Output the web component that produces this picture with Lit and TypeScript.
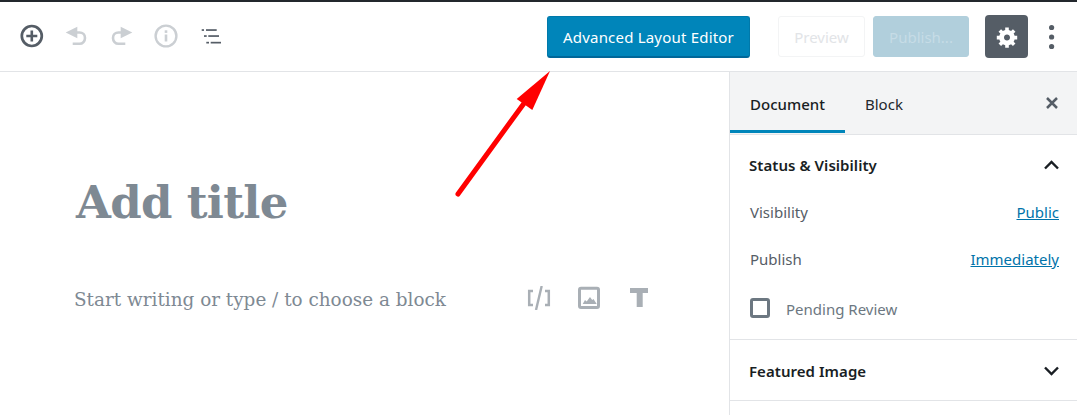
import { LitElement, html, css, svg } from "lit";
import { customElement } from "lit/decorators.js";

@customElement("app-root")
export class AppRoot extends LitElement {
  static styles = css`
    :host { display: block; width: 1077px; height: 415px; position: relative; overflow: hidden; background: #fff; font-family: "Noto Sans", sans-serif; color: #191e23; }
    .adminbar { height: 2px; background: #23282d; }
    .top { height: 69px; border-bottom: 1px solid #e2e4e7; display: flex; align-items: center; padding: 0 20px; }
    .tools { display: flex; align-items: center; gap: 20px; flex: 1; padding-bottom: 1px; }
    .tools svg { display: block; }
    .tools .redo { margin-left: 2px; }
    .tools .nav { margin-left: 3px; }
    .actions { display: flex; align-items: center; }
    button { font-family: inherit; box-sizing: border-box; border-radius: 3px; font-size: 15px; padding: 0; margin: 0; }
    .ale { width: 203px; height: 42px; margin-top: 1px; background: #0085ba; border: 1px solid #0079aa; border-bottom: 2px solid #006799; color: #fff; margin-right: 28px; font-size: 15px; letter-spacing: .2px; }
    .preview { width: 87px; height: 41px; background: #fff; border: 1px solid #f3f4f5; color: #e2e4e7; margin-right: 8px; }
    .publish { width: 96px; height: 41px; background: #b1cfdc; border: 1px solid #b1cfdc; color: #c6dce6; margin-right: 16px; }
    .gear { width: 43px; height: 43px; background: #555d66; border: none; border-radius: 4px; display: flex; align-items: center; justify-content: center; margin-right: 19px; }
    .dots { width: 10px; display: block; }
    .body { display: flex; height: 344px; }
    .main { flex: 1; min-width: 0; padding-left: 76px; }
    .title { margin: 0; font-family: "DejaVu Serif", serif; font-weight: 700; font-size: 45px; line-height: 60px; padding-top: 101px; color: #7e8993; letter-spacing: -.7px; }
    .prompt { display: flex; align-items: center; margin: 0 0 0 -2px; padding-top: 50px; height: 30px; }
    .ptext { font-family: "DejaVu Serif", serif; font-size: 18.4px; color: #7e8993; width: 453px; white-space: nowrap; position: relative; top: 1px; }
    .picons { display: flex; gap: 26px; align-items: center; }
    .picons svg { display: block; }
    .side { width: 348px; box-sizing: border-box; border-left: 1px solid #e2e4e7; flex: none; }
    .tabs { height: 62px; background: #f3f4f5; border-bottom: 1px solid #e2e4e7; display: flex; font-size: 15px; }
    .tab { height: 53px; padding-top: 5px; display: flex; align-items: center; }
    .tab.doc { width: 115px; border-bottom: 3px solid #0085ba; font-weight: 500; justify-content: center; color: #191e23; }
    .tab.blk { padding-left: 20px; color: #23282d; }
    .close { margin-left: auto; margin-right: 18px; height: 62px; display: flex; align-items: center; }
    .panel { border-bottom: 1px solid #e2e4e7; padding: 0 18px 0 19px; }
    .phead { display: flex; justify-content: space-between; align-items: center; font-size: 15px; font-weight: 600; color: #191e23; letter-spacing: .05px; }
    .status { height: 204px; box-sizing: content-box; }
    .status .phead { height: 47px; padding-top: 6px; }
    .row { display: flex; justify-content: space-between; align-items: center; height: 47px; font-size: 15px; color: #555d66; padding-left: 1px; }
    a { color: #0073aa; text-decoration: underline; }
    .check { display: flex; align-items: center; height: 53px; font-size: 15px; color: #6c7781; padding-left: 1px; }
    .box { width: 20px; height: 20px; box-sizing: border-box; border: 3px solid #6c7781; border-radius: 3px; margin-right: 16px; position: relative; top: -1px; }
    .feat { height: 60px; }
    .feat .phead { height: 61px; }
    .arrow { position: absolute; left: 440px; top: 60px; pointer-events: none; }
  `;

  render() {
    const undo = svg`<path d="M12 8.500h3.500c3.200 0 5.500 2.300 5.500 5.400s-2.300 5.900-5.500 5.900H8.700" fill="none" stroke="#cbcfd3" stroke-width="2.600"/><path d="M1.700 8.500L13.300 2.700v11.600z" fill="#cbcfd3"/>`;
    return html`
      <div class="adminbar"></div>
      <div class="top">
        <div class="tools">
          <svg width="24" height="24" viewBox="0 0 24 24"><circle cx="11.800" cy="12" r="10" fill="none" stroke="#555d66" stroke-width="2.700"/><path d="M11.800 6.500v11M6.300 12h11" stroke="#555d66" stroke-width="2.600"/></svg>
          <svg width="24" height="24" viewBox="0 0 24 24">${undo}</svg>
          <svg class="redo" width="24" height="24" viewBox="0 0 24 24"><g transform="translate(24,0) scale(-1,1)">${undo}</g></svg>
          <svg width="24" height="24" viewBox="0 0 24 24"><circle cx="12" cy="12" r="10.400" fill="none" stroke="#cbcfd3" stroke-width="2.400"/><rect x="10.700" y="10.500" width="2.600" height="7" fill="#cbcfd3"/><rect x="10.700" y="6.300" width="2.600" height="2.600" fill="#cbcfd3"/></svg>
          <svg class="nav" width="20" height="24" viewBox="0 0 20 24"><g fill="#555d66"><rect x=".7" y="5.200" width="2.300" height="1.700"/><rect x="5" y="5.200" width="10.700" height="1.700"/><rect x="3" y="11.200" width="2.700" height="1.700"/><rect x="7.300" y="11.200" width="10.700" height="1.700"/><rect x="5.300" y="17.800" width="2.700" height="1.700"/><rect x="9.700" y="17.800" width="10.300" height="1.700"/></g></svg>
        </div>
        <div class="actions">
          <button class="ale">Advanced Layout Editor</button>
          <button class="preview">Preview</button>
          <button class="publish">Publish...</button>
          <button class="gear"><svg width="24" height="24" viewBox="0 0 20 20"><path fill="#fff" d="M18 12h-2.180c-.17.7-.44 1.350-.81 1.930l1.540 1.540-2.100 2.100-1.540-1.540c-.58.360-1.230.640-1.910.810V19H8v-2.180c-.68-.170-1.330-.450-1.910-.810l-1.540 1.540-2.100-2.100 1.540-1.540c-.37-.580-.640-1.230-.810-1.910H1V9h2.180c.170-.680.440-1.330.810-1.910L2.450 5.550l2.100-2.100 1.540 1.540c.580-.370 1.230-.640 1.910-.810V2h3v2.180c.680.170 1.330.440 1.910.810l1.540-1.540 2.100 2.100-1.540 1.540c.370.580.640 1.230.810 1.910H18v3zM9.500 13c1.400 0 2.500-1.100 2.500-2.500S10.900 8 9.500 8 7 9.100 7 10.500 8.100 13 9.500 13z" transform="translate(.5,0)"/></svg></button>
          <svg class="dots" width="10" height="26" viewBox="0 0 10 26"><circle cx="4.600" cy="3.500" r="2.600" fill="#555d66"/><circle cx="4.600" cy="13" r="2.600" fill="#555d66"/><circle cx="4.600" cy="22.500" r="2.600" fill="#555d66"/></svg>
        </div>
      </div>
      <div class="body">
        <div class="main">
          <h1 class="title">Add title</h1>
          <div class="prompt">
            <span class="ptext">Start writing or type / to choose a block</span>
            <div class="picons">
              <svg width="24" height="24" viewBox="0 0 24 24"><path d="M6 5H2.200v14H6M18 5h3.800v14H18" fill="none" stroke="#a9afb5" stroke-width="2.500"/><path d="M14.700 0L9 24" stroke="#a9afb5" stroke-width="2.400" fill="none"/></svg>
              <svg width="24" height="24" viewBox="0 0 24 24"><rect x="2.500" y="2.200" width="19" height="19.300" rx="1.500" fill="none" stroke="#a9afb5" stroke-width="3"/><path d="M5.700 18l2.300-4 1.700 1.500 3.300-4.500 2.200 3 1.300-1 3.200 5z" fill="#a9afb5"/></svg>
              <svg width="24" height="24" viewBox="0 0 24 24"><path d="M3 2h18v5h-5.300v14h-6V7H3z" fill="#a9afb5"/></svg>
            </div>
          </div>
        </div>
        <div class="side">
          <div class="tabs">
            <div class="tab doc">Document</div>
            <div class="tab blk">Block</div>
            <div class="close"><svg width="14" height="14" viewBox="0 0 14 14"><path d="M2 2l10 10M12 2L2 12" stroke="#555d66" stroke-width="2.500"/></svg></div>
          </div>
          <div class="panel status">
            <div class="phead">Status &amp; Visibility <svg width="15" height="10" viewBox="0 0 15 10"><path d="M1 8.500L7.500 2 14 8.500" fill="none" stroke="#191e23" stroke-width="2.400"/></svg></div>
            <div class="row"><span>Visibility</span><a>Public</a></div>
            <div class="row"><span>Publish</span><a>Immediately</a></div>
            <div class="check"><div class="box"></div>Pending Review</div>
          </div>
          <div class="panel feat">
            <div class="phead">Featured Image <svg width="15" height="10" viewBox="0 0 15 10"><path d="M1 1.500L7.500 8 14 1.500" fill="none" stroke="#191e23" stroke-width="2.400"/></svg></div>
          </div>
        </div>
      </div>
      <svg class="arrow" width="130" height="150" viewBox="0 0 130 150"><path d="M18 134L85 42" stroke="#f00" stroke-width="5" stroke-linecap="round" fill="none"/><path d="M110 11L76.700 39 92.300 50z" fill="#f00"/></svg>
    `;
  }
}
